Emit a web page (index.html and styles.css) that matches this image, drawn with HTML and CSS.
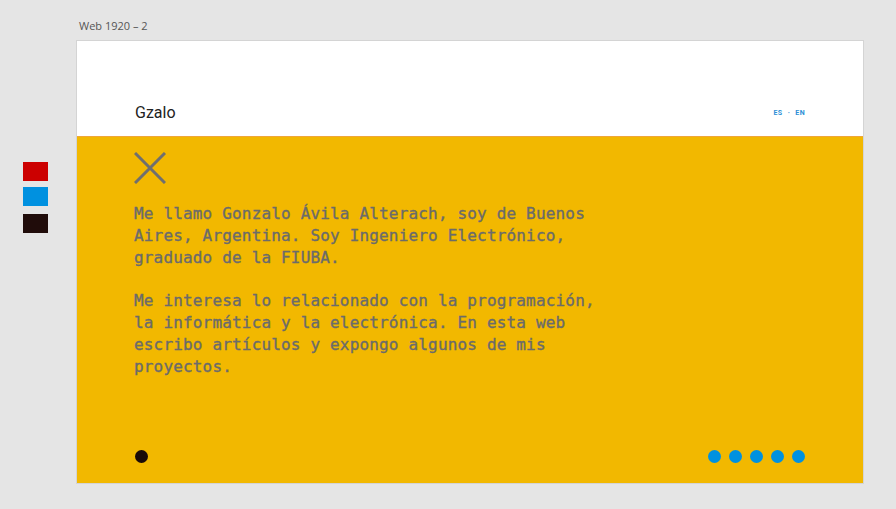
FILE: index.html
```html
<!DOCTYPE html>
<html>
<head>
<meta charset="utf-8">
<link rel="stylesheet" href="styles.css">
</head>
<body>
<div class="canvas">
  <div class="label">Web 1920 – 2</div>
  <div class="swatches">
    <div class="swatch red"></div>
    <div class="swatch blue"></div>
    <div class="swatch dark"></div>
  </div>
  <div class="artboard">
    <header class="header">
      <div class="brand">Gzalo</div>
      <div class="lang">ES · EN</div>
    </header>
    <main class="panel">
      <svg class="close" width="32" height="32" viewBox="0 0 32 32">
        <path d="M1 1 L31 31 M31 1 L1 31" stroke="#6f6f6f" stroke-width="3" fill="none"/>
      </svg>
      <div class="bio">
        <p>Me llamo Gonzalo Ávila Alterach, soy de Buenos<br>Aires, Argentina. Soy Ingeniero Electrónico,<br>graduado de la FIUBA.</p>
        <p>Me interesa lo relacionado con la programación,<br>la informática y la electrónica. En esta web<br>escribo artículos y expongo algunos de mis<br>proyectos.</p>
      </div>
      <div class="footer">
        <span class="dot black"></span>
        <div class="pager">
          <span class="dot"></span><span class="dot"></span><span class="dot"></span><span class="dot"></span><span class="dot"></span>
        </div>
      </div>
    </main>
  </div>
</div>
</body>
</html>
```
FILE: styles.css
```css
html, body {
  margin: 0;
  padding: 0;
  background: #e5e5e5;
  width: 896px;
  height: 509px;
  overflow: hidden;
}
.canvas {
  position: relative;
  width: 896px;
  height: 509px;
}
.label {
  position: absolute;
  left: 79px;
  top: 18px;
  font-family: "Open Sans", "Liberation Sans", sans-serif;
  font-size: 11px;
  color: #555;
}
.swatches {
  position: absolute;
  left: 23px;
  top: 162px;
  display: flex;
  flex-direction: column;
}
.swatch {
  width: 25px;
  height: 19px;
}
.swatch.red { background: #cc0000; }
.swatch.blue { background: #0091e0; margin-top: 6px; }
.swatch.dark { background: #200c0a; margin-top: 8px; }
.artboard {
  position: absolute;
  left: 76px;
  top: 40px;
  width: 786px;
  height: 442px;
  border: 1px solid #d4d4d4;
  display: flex;
  flex-direction: column;
}
.header {
  height: 95px;
  background: #fff;
  box-sizing: border-box;
  padding: 0 58px 14px 58px;
  display: flex;
  align-items: flex-end;
  justify-content: space-between;
}
.brand {
  font-family: Roboto, "Noto Sans", sans-serif;
  font-size: 16px;
  color: #222;
  line-height: 18px;
}
.lang {
  font-family: Roboto, "Noto Sans", sans-serif;
  font-size: 7px;
  font-weight: bold;
  color: #2e8fd6;
  line-height: 8px;
  padding-bottom: 5px;
  letter-spacing: 0.4px;
  word-spacing: 3px;
}
.panel {
  flex: 1;
  background: #f2b800;
  border-top: 1px solid #efa63a;
  margin: 0;
  padding: 15px 58px 20px 57px;
  display: flex;
  flex-direction: column;
  box-sizing: border-box;
  position: relative;
}
.close {
  display: block;
  margin-left: 0;
}
.bio {
  margin-top: 19px;
  font-family: "DejaVu Sans Mono", "Liberation Mono", monospace;
  font-size: 16px;
  letter-spacing: 0.17px;
  line-height: 22px;
  color: #6b6b6b;
  -webkit-text-stroke: 0.35px #6b6b6b;
}
.bio p {
  margin: 0 0 21px 0;
}
.footer {
  margin-top: auto;
  display: flex;
  justify-content: space-between;
  align-items: center;
}
.pager {
  display: flex;
  gap: 8px;
}
.dot {
  width: 13px;
  height: 13px;
  border-radius: 50%;
  background: #0091e0;
  display: block;
}
.dot.black {
  background: #1a0a08;
  margin-left: 1px;
}
```
